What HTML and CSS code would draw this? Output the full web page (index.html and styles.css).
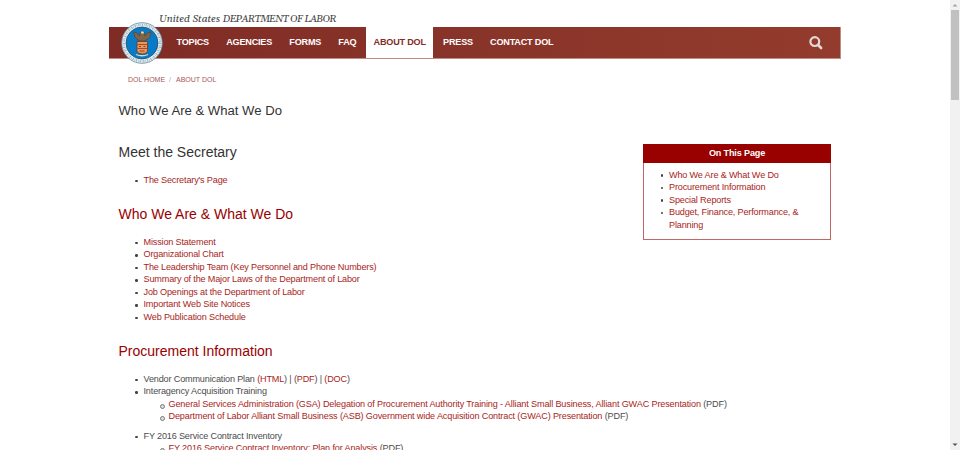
FILE: index.html
```html
<!DOCTYPE html>
<html lang="en">
<head>
<meta charset="utf-8">
<title>About DOL</title>
<link rel="stylesheet" href="styles.css">
</head>
<body>
<div class="page">
  <header>
    <div class="agency">United States <span>DEPARTMENT OF LABOR</span></div>
    <div class="bar">
      <svg class="seal" viewBox="0 0 42 42">
        <circle cx="21" cy="21" r="20.3" fill="#edf3f6" stroke="#5f8799" stroke-width=".8"/>
        <circle cx="21" cy="21" r="18.2" fill="none" stroke="#9db6c4" stroke-width="2.5" stroke-dasharray="1.2 .9 .6 1"/>
        <circle cx="21" cy="21" r="16" fill="#087bc8" stroke="#234e69" stroke-width=".8"/>
        <path d="M12.5 10q4 0 6 4l1-4 2-1 2 1.2.5 3.8q2-4 6-4 0 6-5 8l-2 1h-4l-2-1q-4-2-4.500-8z" fill="#806449" stroke="#4c4031" stroke-width=".6"/>
        <path d="M20 9.500h2.500l.3 2h-2.500z" fill="#eee2c3"/>
        <path d="M16 19.500h10.500v9q0 3-5.200 3.500-5.300-.5-5.300-3.500z" fill="#e9985c" stroke="#70331f" stroke-width=".8"/>
        <path d="M16.500 22.500h9.500M16.500 26.500h9.500" stroke="#843c26" stroke-width=".8"/>
        <path d="M18 24.500h2m2.500 0h2m-6 4.500h5" stroke="#963f27" stroke-width="1.200"/>
        <path d="M15 32.500q6 2.500 12 0" fill="none" stroke="#ead7a8" stroke-width="1.300"/>
      </svg>
      <nav>
        <a>TOPICS</a><a>AGENCIES</a><a>FORMS</a><a>FAQ</a><a class="active">ABOUT DOL</a><a>PRESS</a><a>CONTACT DOL</a>
      </nav>
      <svg class="search" viewBox="0 0 14 14" fill="none" stroke="#e5d9d7"><circle cx="5.8" cy="5.6" r="4.4" stroke-width="2.2"/><path d="M9.1 9l3 3" stroke-width="2.6" stroke-linecap="round"/></svg>
    </div>
  </header>
  <div class="crumbs"><a>DOL HOME</a><span>/</span><a>ABOUT DOL</a></div>
  <h1>Who We Are &amp; What We Do</h1>
  <div class="columns">
    <main>
      <h2 class="dark">Meet the Secretary</h2>
      <ul><li><a>The Secretary's Page</a></li></ul>
      <h2>Who We Are &amp; What We Do</h2>
      <ul>
        <li><a>Mission Statement</a></li>
        <li><a>Organizational Chart</a></li>
        <li><a>The Leadership Team (Key Personnel and Phone Numbers)</a></li>
        <li><a>Summary of the Major Laws of the Department of Labor</a></li>
        <li><a>Job Openings at the Department of Labor</a></li>
        <li><a>Important Web Site Notices</a></li>
        <li><a>Web Publication Schedule</a></li>
      </ul>
      <h2>Procurement Information</h2>
      <ul>
        <li>Vendor Communication Plan <a>(HTML</a>) | (<a>PDF</a>) | <a>(DOC</a>)</li>
        <li>Interagency Acquisition Training
          <ul class="long">
            <li><a>General Services Administration (GSA) Delegation of Procurement Authority Training - Alliant Small Business, Alliant GWAC Presentation</a> (PDF)</li>
            <li><a>Department of Labor Alliant Small Business (ASB) Government wide Acquisition Contract (GWAC) Presentation</a> (PDF)</li>
          </ul>
        </li>
        <li>FY 2016 Service Contract Inventory
          <ul class="long"><li><a>FY 2016 Service Contract Inventory: Plan for Analysis</a> (PDF)</li></ul>
        </li>
      </ul>
    </main>
    <aside>
      <h3>On This Page</h3>
      <ul>
        <li><a>Who We Are &amp; What We Do</a></li>
        <li><a>Procurement Information</a></li>
        <li><a>Special Reports</a></li>
        <li><a>Budget, Finance, Performance, &amp; Planning</a></li>
      </ul>
    </aside>
  </div>
</div>
<div class="scrollbar">
  <svg viewBox="0 0 10 10"><path d="M2.5 6.5L5 4l2.5 2.5z" fill="#a3a3a3"/></svg>
  <div class="thumb"></div>
  <svg class="down" viewBox="0 0 10 10"><path d="M2.5 3.5L5 6l2.5-2.5z" fill="#505050"/></svg>
</div>
</body>
</html>
```
FILE: styles.css
```css
* { box-sizing: border-box; }
body {
  margin: 0;
  height: 450px;
  overflow: hidden;
  display: flex;
  justify-content: space-between;
  background: #fff;
  color: #4c4c4c;
  font: 9.1px/12.5px "Liberation Sans", Arial, sans-serif;
  letter-spacing: -.16px;
}
.page { width: 731.5px; margin-left: 109px; height: 450px; overflow: hidden; }
.agency {
  height: 27px;
  padding: 13px 0 0 50px;
  color: #444;
  font: italic 10.2px/13px Gelasio, Georgia, "DejaVu Serif", serif;
  letter-spacing: 0;
  white-space: nowrap;
}
.agency span { letter-spacing: -.55px; }
.bar {
  position: relative;
  display: flex;
  justify-content: space-between;
  height: 31.5px;
  padding-left: 60px;
  background: linear-gradient(90deg, #7f2c26, #933c2d);
  border-bottom: 1px solid #c28c86;
  border-right: 1px solid #c28c86;
}
.seal { position: absolute; left: 12px; top: -5px; width: 42px; height: 42px; }
nav { display: flex; gap: 2.2px; }
nav a {
  padding: 0 7.5px;
  color: #fff;
  font-weight: bold;
  font-size: 9.1px;
  letter-spacing: -.2px;
  line-height: 31px;
  white-space: nowrap;
}
nav .active { background: #fff; color: #822d27; }
.search { width: 14px; height: 14px; margin: 9px 17px 0 0; }
.crumbs {
  display: flex;
  height: 44px;
  padding: 15px 0 0 19px;
  color: #aaa;
  font-size: 7px;
  letter-spacing: 0;
}
.crumbs a { color: #a65855; }
.crumbs span { margin: 0 5px 0 4px; }
h1, h2 { margin: 0; font-weight: normal; letter-spacing: 0; }
h1 { height: 41.5px; padding-left: 9.5px; font-size: 13.125px; line-height: 15px; color: #333; }
.columns { display: flex; justify-content: space-between; padding: 0 9.5px; }
main { width: 0; flex: 1; white-space: nowrap; }
h2 { color: #990000; font-size: 14px; line-height: 17px; margin-bottom: 12.8px; }
h2.dark { color: #333; }
a { color: #a81e22; }
ul { margin: 0 0 19.7px; padding-left: 25px; list-style: none; }
li { position: relative; }
li::before {
  content: "";
  position: absolute;
  left: -8.2px;
  top: 5.8px;
  width: 2.5px;
  height: 2.5px;
  border-radius: 50%;
  background: #444;
}
ul ul { margin-bottom: 7px; }
.long { letter-spacing: -.14px; }
ul ul li::before { width: 3px; height: 3px; background: #ddd; border: .7px solid #777; }
aside { width: 188px; height: 96px; border: 1px solid #c36666; white-space: normal; }
h3 { margin: -1px -1px 6px; color: #fff; background: #990000; font-size: 9.1px; line-height: 18.5px; text-align: center; }
aside ul { padding-right: 25px; }
.scrollbar { display: flex; flex-direction: column; width: 10.5px; height: 450px; background: #f1f1f1; }
.scrollbar svg { width: 10px; height: 10px; }
.thumb { width: 8.5px; height: 90px; margin: 0 1px; background: #c1c1c1; }
.down { margin-top: auto; }
```
